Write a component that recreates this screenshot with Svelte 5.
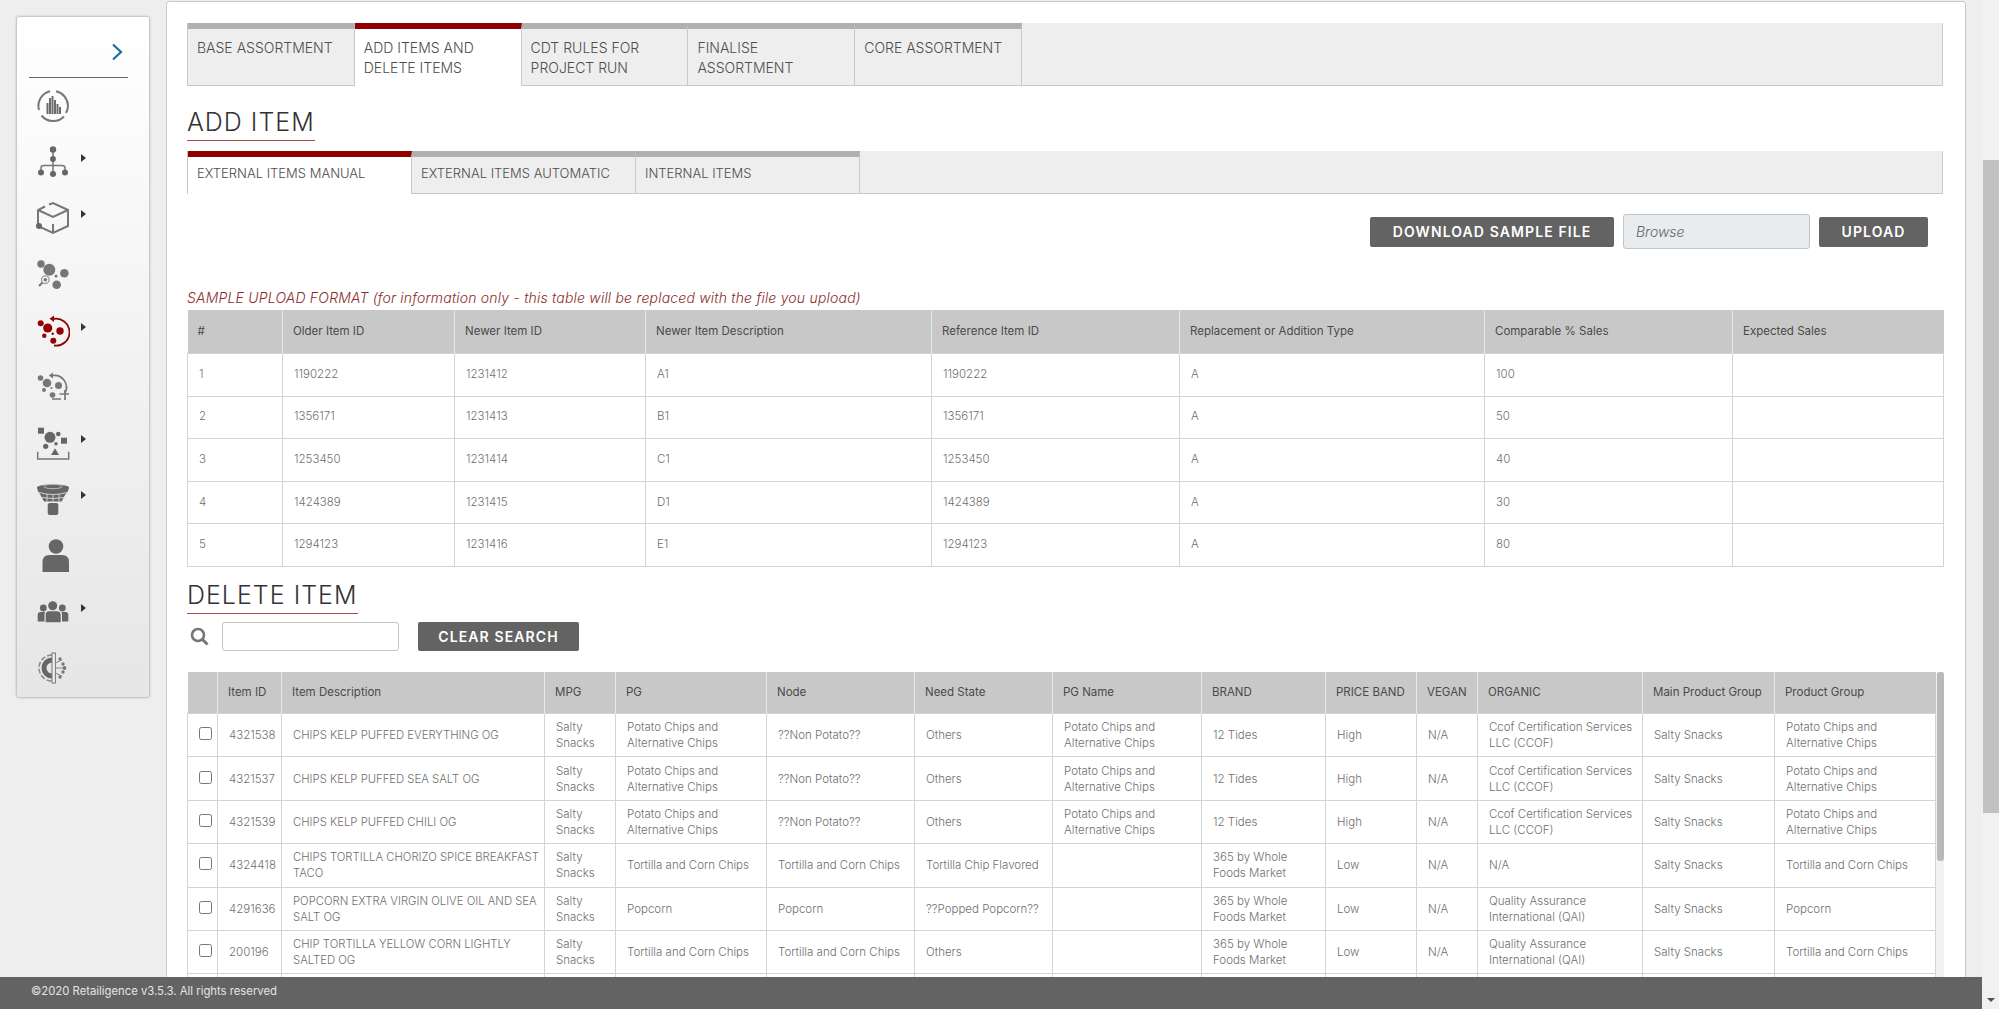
<script>
  const topTabs = ['BASE ASSORTMENT', 'ADD ITEMS AND DELETE ITEMS', 'CDT RULES FOR PROJECT RUN', 'FINALISE ASSORTMENT', 'CORE ASSORTMENT'];
  const subTabs = ['EXTERNAL ITEMS MANUAL', 'EXTERNAL ITEMS AUTOMATIC', 'INTERNAL ITEMS'];
  const sampleCols = [95, 172, 191, 286, 248, 305, 248, 211];
  const sampleHead = ['#', 'Older Item ID', 'Newer Item ID', 'Newer Item Description', 'Reference Item ID', 'Replacement or Addition Type', 'Comparable % Sales', 'Expected Sales'];
  const sampleRows = [
    ['1', '1190222', '1231412', 'A1', '1190222', 'A', '100', ''],
    ['2', '1356171', '1231413', 'B1', '1356171', 'A', '50', ''],
    ['3', '1253450', '1231414', 'C1', '1253450', 'A', '40', ''],
    ['4', '1424389', '1231415', 'D1', '1424389', 'A', '30', ''],
    ['5', '1294123', '1231416', 'E1', '1294123', 'A', '80', '']
  ];
  const itemCols = [30, 64, 263, 71, 151, 148, 138, 149, 124, 91, 61, 165, 132, 161];
  const itemHead = ['', 'Item ID', 'Item Description', 'MPG', 'PG', 'Node', 'Need State', 'PG Name', 'BRAND', 'PRICE BAND', 'VEGAN', 'ORGANIC', 'Main Product Group', 'Product Group'];
  const pca = 'Potato Chips and Alternative Chips';
  const tcc = 'Tortilla and Corn Chips';
  const ccof = 'Ccof Certification Services LLC (CCOF)';
  const qai = 'Quality Assurance International (QAI)';
  const wf = '365 by Whole Foods Market';
  const ss = 'Salty Snacks';
  const itemRows = [
    ['4321538', 'CHIPS KELP PUFFED EVERYTHING OG', ss, pca, '??Non Potato??', 'Others', pca, '12 Tides', 'High', 'N/A', ccof, ss, pca],
    ['4321537', 'CHIPS KELP PUFFED SEA SALT OG', ss, pca, '??Non Potato??', 'Others', pca, '12 Tides', 'High', 'N/A', ccof, ss, pca],
    ['4321539', 'CHIPS KELP PUFFED CHILI OG', ss, pca, '??Non Potato??', 'Others', pca, '12 Tides', 'High', 'N/A', ccof, ss, pca],
    ['4324418', 'CHIPS TORTILLA CHORIZO SPICE BREAKFAST TACO', ss, tcc, tcc, 'Tortilla Chip Flavored', '', wf, 'Low', 'N/A', 'N/A', ss, tcc],
    ['4291636', 'POPCORN EXTRA VIRGIN OLIVE OIL AND SEA SALT OG', ss, 'Popcorn', 'Popcorn', '??Popped Popcorn??', '', wf, 'Low', 'N/A', qai, ss, 'Popcorn'],
    ['200196', 'CHIP TORTILLA YELLOW CORN LIGHTLY SALTED OG', ss, tcc, tcc, 'Others', '', wf, 'Low', 'N/A', qai, ss, tcc]
  ];
</script>

<div class="page">
  <aside class="sidebar">
    <div class="side-top">
      <svg class="chev" width="12" height="18" viewBox="0 0 12 18"><path d="M2 1.5 10 9 2 16.5" fill="none" stroke="#1c6ca1" stroke-width="2.2"/></svg>
    </div>
    <nav class="nav">
      <div class="nav-item">
        <svg viewBox="0 0 34 34"><g fill="none" stroke="#777" stroke-width="2"><path d="M3 21A15 15 0 0 1 14 2.3"/><path d="M20 2.3A15 15 0 0 1 32 17 15 15 0 0 1 30 24"/><path d="M5.5 26.5A15 15 0 0 0 28 27.5"/></g><g fill="#6c6c6c"><rect x="10.500" y="14" width="2" height="11"/><rect x="13" y="9" width="2" height="16"/><rect x="15.500" y="7" width="2" height="18"/><rect x="18" y="11" width="2" height="14"/><rect x="20.500" y="15" width="2" height="10"/><rect x="23" y="18" width="2" height="7"/></g></svg>
      </div>
      <div class="nav-item">
        <svg viewBox="0 0 34 34"><path d="M17 4V28M5 27V23Q5 20.500 8 20.500H26Q29 20.500 29 23V27" fill="none" stroke="#777" stroke-width="1.500"/><g fill="#666"><circle cx="17" cy="4.500" r="3.200"/><circle cx="17" cy="14" r="2.900"/><circle cx="5" cy="27.500" r="3"/><circle cx="17" cy="29" r="3"/><circle cx="29" cy="27.500" r="3"/></g></svg>
        <span class="caret"></span>
      </div>
      <div class="nav-item">
        <svg viewBox="0 0 34 34"><path d="M13 3.500 17 2 32 9V25L17 32 2 25V9L9 5.500M2 9 17 16 32 9M17 23V32" fill="none" stroke="#777" stroke-width="2"/><circle cx="3" cy="25" r="3" fill="#666"/></svg>
        <span class="caret"></span>
      </div>
      <div class="nav-item">
        <svg viewBox="0 0 34 34"><g fill="#777"><circle cx="13.300" cy="11.700" r="6"/><circle cx="5" cy="6" r="3.700"/><circle cx="28.300" cy="15.300" r="4.300"/><circle cx="20.700" cy="26.700" r="4.300"/><circle cx="20" cy="18" r="1.500"/><circle cx="9.300" cy="21.700" r="1.800"/></g><circle cx="9.300" cy="21.700" r="3.800" fill="none" stroke="#999" stroke-width="1.300"/><path d="M6.500 24.500 3 28" stroke="#777" stroke-width="2"/></svg>
      </div>
      <div class="nav-item">
        <svg viewBox="0 0 34 34"><g fill="#960000"><circle cx="11.700" cy="14" r="4.600"/><circle cx="4.700" cy="9.300" r="3"/><circle cx="24" cy="17" r="3.700"/><circle cx="8.300" cy="21.700" r="2.200"/><circle cx="17.300" cy="26.700" r="3"/><circle cx="16.700" cy="19.700" r="1.200"/><path d="M18 1.500V8L13.500 4.800Z"/></g><path d="M17 5A13.500 13.500 0 1 1 18 31.500" fill="none" stroke="#960000" stroke-width="1.800"/></svg>
        <span class="caret"></span>
      </div>
      <div class="nav-item">
        <svg viewBox="0 0 34 34"><g fill="#777"><circle cx="11" cy="13" r="4.300"/><circle cx="4.500" cy="8" r="2.800"/><circle cx="22.500" cy="15.500" r="3.500"/><circle cx="8" cy="20" r="2"/><circle cx="16.500" cy="25" r="2.800"/><circle cx="15.500" cy="18" r="1.100"/><path d="M17 2.500V8.500L12.800 5.500Z"/></g><path d="M16.500 5.500A12 12 0 0 1 29 23M16 29H25" fill="none" stroke="#777" stroke-width="1.700"/><path d="M23.500 24H33M29 20V30" stroke="#777" stroke-width="1.700"/></svg>
      </div>
      <div class="nav-item">
        <svg viewBox="0 0 34 34"><g fill="#666"><rect x="2" y="1.700" width="6" height="6"/><circle cx="14" cy="11.300" r="5.500"/><circle cx="22.300" cy="8" r="2.300"/><rect x="25" y="11.700" width="6" height="6"/><circle cx="9.700" cy="20.300" r="2.600"/><circle cx="20" cy="17.700" r="1.700"/><path d="M19 22.300 23 29H15Z"/></g><path d="M1.700 25.700V33H32.700V25.700" fill="none" stroke="#777" stroke-width="1.500"/></svg>
        <span class="caret"></span>
      </div>
      <div class="nav-item">
        <svg viewBox="0 0 34 34"><path d="M1 5C1 8 3 11 4.500 13L8 19.500H25.700L29 13C31 11 33 8 33 5 30 1.500 4 1.500 1 5Z" fill="#666"/><rect x="11.700" y="21" width="10.600" height="12" rx="2" fill="#666"/><ellipse cx="17" cy="4.500" rx="9" ry="2.200" fill="none" stroke="#bbb" stroke-width="1"/><path d="M3 10.500Q17 14.500 31 10.500M6 15.500Q17 17.500 28 15.500M11 12V19.500M23 12V19.500M17 13V19.500" fill="none" stroke="#ddd" stroke-width="0.900"/></svg>
        <span class="caret"></span>
      </div>
      <div class="nav-item">
        <svg viewBox="0 0 34 34"><circle cx="20" cy="7.500" r="7.300" fill="#666"/><path d="M6.500 33V23Q6.500 16 13.500 16H26Q33 16 33 23V33Z" fill="#666"/></svg>
      </div>
      <div class="nav-item">
        <svg viewBox="0 0 34 34"><g fill="#666"><circle cx="16.700" cy="10.700" r="4.500"/><circle cx="7.300" cy="13" r="3.400"/><circle cx="26.300" cy="13" r="3.400"/><path d="M9.700 27.300V20Q9.700 16.300 13 16.300H21Q24.700 16.300 24.700 20V27.300Z"/><path d="M1.700 26.500V20Q1.700 17 4.500 17H9Q8.500 18 8.500 20V26.500Z"/><path d="M32.300 26.500V20Q32.300 17 29.500 17H25.500Q26 18 26 20V26.500Z"/></g></svg>
        <span class="caret"></span>
      </div>
      <div class="nav-item">
        <svg viewBox="0 0 34 34"><path d="M16 9A8 8 0 0 0 16 25" fill="none" stroke="#666" stroke-width="5"/><path d="M16 4A13 13 0 0 0 16 30" fill="none" stroke="#888" stroke-width="1.500" stroke-dasharray="5 2"/><rect x="16" y="2" width="3.400" height="30" fill="#eee" stroke="#777"/><g fill="#777"><circle cx="24" cy="8" r="1.700"/><circle cx="27" cy="13" r="1.700"/><circle cx="28.500" cy="17" r="1.900"/><circle cx="27" cy="21" r="1.700"/><circle cx="24" cy="26" r="1.700"/></g><path d="M19 17H27M19 12 26 9M19 22 26 25" stroke="#888" stroke-width="1"/></svg>
      </div>
    </nav>
  </aside>

  <main class="panel">
    <div class="tabs top">
      {#each topTabs as t, i}
        <div class="tab" class:active={i === 1}>{t}</div>
      {/each}
    </div>

    <h2 class="add">ADD ITEM</h2>

    <div class="tabs sub">
      {#each subTabs as t, i}
        <div class="tab" class:active={i === 0}>{t}</div>
      {/each}
    </div>

    <div class="actions">
      <button class="btn dl">DOWNLOAD SAMPLE FILE</button>
      <div class="browse">Browse</div>
      <button class="btn up">UPLOAD</button>
    </div>

    <p class="note">SAMPLE UPLOAD FORMAT (for information only - this table will be replaced with the file you upload)</p>

    <table class="grid sample">
      <colgroup>{#each sampleCols as w}<col style="width:{w}px" />{/each}</colgroup>
      <thead><tr>{#each sampleHead as h}<th>{h}</th>{/each}</tr></thead>
      <tbody>
        {#each sampleRows as r}
          <tr>{#each r as c}<td>{c}</td>{/each}</tr>
        {/each}
      </tbody>
    </table>

    <h2 class="del">DELETE ITEM</h2>

    <div class="search">
      <svg class="mag" width="19" height="19" viewBox="0 0 19 19"><circle cx="8" cy="8" r="6" fill="none" stroke="#777" stroke-width="2.600"/><path d="M12.500 12.500 17.500 17.500" stroke="#777" stroke-width="3"/></svg>
      <input class="q" type="text" />
      <button class="btn clear">CLEAR SEARCH</button>
    </div>

    <div class="items">
      <table class="grid item">
        <colgroup>{#each itemCols as w}<col style="width:{w}px" />{/each}</colgroup>
        <thead><tr>{#each itemHead as h}<th>{h}</th>{/each}</tr></thead>
        <tbody>
          {#each itemRows as r}
            <tr>
              <td class="chk"><input type="checkbox" /></td>
              {#each r as c}<td>{c}</td>{/each}
            </tr>
          {/each}
          <tr>{#each itemCols as w}<td></td>{/each}</tr>
        </tbody>
      </table>
      <div class="track"><div class="thumb"></div></div>
    </div>
  </main>

  <div class="scroll"><div class="sthumb"></div><span class="sarrow"></span></div>

  <footer class="foot">©2020 Retailigence v3.5.3. All rights reserved</footer>
</div>

<style>
  :global(body) { margin: 0; background: #eeeeee; }
  .page {
    position: relative;
    display: flex;
    align-items: flex-start;
    height: 1009px;
    overflow: hidden;
    font-family: Inter, "Open Sans", sans-serif;
    color: #555;
    background: #eeeeee;
  }
  .sidebar {
    flex: none;
    box-sizing: border-box;
    width: 134px;
    height: 682px;
    margin: 16px 16px 0 16px;
    background: linear-gradient(#ffffff, #e6e6e6);
    border: 1px solid #c9c9c9;
    border-radius: 3px;
    box-shadow: 0 0 2px #bbb;
  }
  .side-top {
    height: 61px;
    margin: 0 21px 0 12px;
    border-bottom: 1px solid #666;
    display: flex;
    justify-content: flex-end;
    align-items: flex-start;
    padding-top: 26px;
    box-sizing: border-box;
  }
  .chev { margin-right: 5px; }
  .nav { padding-left: 19px; }
  .nav-item {
    height: 56.2px;
    display: flex;
    align-items: center;
    position: relative;
  }
  .nav-item svg { width: 34px; height: 34px; display: block; }
  .caret {
    width: 0;
    height: 0;
    margin: -8px 0 0 11px;
    border-left: 5px solid #333;
    border-top: 4px solid transparent;
    border-bottom: 4px solid transparent;
  }
  .panel {
    flex: none;
    box-sizing: border-box;
    width: 1800px;
    height: 1100px;
    margin-top: 1px;
    padding: 21px 22px 0 20px;
    background: #fff;
    border: 1px solid #c9c9c9;
    border-radius: 3px;
    overflow: hidden;
  }
  .tabs {
    display: flex;
    background: #eeeeee;
    border: 1px solid #c8c8c8;
    border-top: none;
    box-sizing: border-box;
  }
  .tabs.top { height: 63px; }
  .tabs.sub { height: 43px; margin-top: 10px; }
  .tab {
    box-sizing: border-box;
    border-top: 6px solid #b0b0b0;
    border-right: 1px solid #c8c8c8;
    color: #4d4d4d;
  }
  .top .tab {
    width: 166.800px;
    padding: 9px 8px 0 9px;
    font-size: 14px;
    line-height: 19.500px;
    font-weight: 300;
    height: 62px;
  }
  .top .tab:nth-child(2), .top .tab:nth-child(3) { padding-right: 22px; }
  .sub .tab {
    width: 224px;
    padding: 0 4px 0 9px;
    font-size: 13px;
    line-height: 32px;
    font-weight: 300;
    height: 42px;
  }
  .tab.active { background: #fff; border-top-color: #900000; }
  .top .tab.active { height: 63px; }
  .sub .tab.active { height: 43px; }
  h2 {
    width: fit-content;
    margin: 0;
    font-size: 25px;
    line-height: 30px;
    font-weight: 300;
    letter-spacing: 1px;
    color: #333;
    padding: 1px 0 3px;
    border-bottom: 1px solid #b04a4a;
  }
  .add { margin-top: 20px; }
  .del { margin-top: 12px; }
  .actions {
    display: flex;
    justify-content: flex-end;
    align-items: center;
    gap: 9px;
    height: 35px;
    margin-top: 20px;
    padding-right: 15px;
  }
  .btn {
    height: 30px;
    padding: 0;
    border: none;
    border-radius: 2px;
    background: #636363;
    color: #fff;
    font: 600 14px/30px Inter, sans-serif;
    letter-spacing: 1.100px;
  }
  .btn.dl { width: 244px; }
  .btn.up { width: 109px; }
  .btn.clear { width: 161px; height: 29px; line-height: 29px; margin-left: 19px; }
  .browse {
    box-sizing: border-box;
    width: 187px;
    height: 35px;
    padding-left: 12px;
    line-height: 33px;
    font-size: 14px;
    font-style: italic;
    font-weight: 300;
    color: #666;
    background: #e9ecef;
    border: 1px solid #c5c5c5;
    border-radius: 3px;
  }
  .note {
    margin: 39px 0 2px;
    font-size: 14px;
    line-height: 20px;
    font-style: italic;
    font-weight: 300;
    letter-spacing: 0.200px;
    color: #8a2b2b;
    white-space: nowrap;
  }
  .grid {
    border-collapse: collapse;
    table-layout: fixed;
    font-size: 11.500px;
    line-height: 16px;
  }
  .grid th {
    background: #c8c8c8;
    font-weight: 400;
    color: #4a4a4a;
    text-align: left;
    padding: 0 4px 1px 10px;
    border-right: 1px solid #e6e6e6;
  }
  .grid th:last-child { border-right: none; }
  .grid td {
    padding: 0 4px 0 11px;
    border: 1px solid #d4d4d4;
    color: #6f6f6f;
    font-weight: 300;
  }
  .sample { width: 1756px; }
  .sample th { height: 42px; }
  .sample td { height: 39.600px; padding-bottom: 2px; }
  .search {
    display: flex;
    align-items: center;
    height: 29px;
    margin-top: 8px;
  }
  .mag { margin: 0 13px 0 3px; flex: none; }
  .q {
    box-sizing: border-box;
    width: 177px;
    height: 29px;
    border: 1px solid #c5c5c5;
    border-radius: 3px;
    background: #fff;
    padding: 0;
  }
  .items {
    display: flex;
    align-items: flex-start;
    margin-top: 21px;
    width: 1757px;
    height: 320px;
    overflow: hidden;
  }
  .item { width: 1749px; flex: none; }
  .item th { height: 40px; }
  .item td { height: 42.400px; }
  .item td:nth-child(3) { font-size: 11.300px; padding-right: 0; }
  .chk { padding: 0 0 0 11px !important; }
  .chk input { display: block; margin: -3px 0 0 0; width: 13px; height: 13px; }
  .track { width: 8px; flex: none; height: 320px; background: #f1f1f1; }
  .thumb { width: 7px; margin-left: 1px; height: 189px; background: #b9b9b9; border-radius: 3px; }
  .scroll {
    position: absolute;
    top: 0;
    right: 0;
    width: 17px;
    height: 1009px;
    background: #f1f1f1;
  }
  .sthumb { position: absolute; top: 160px; left: 1px; width: 16px; height: 653px; background: #c1c1c1; }
  .sarrow {
    position: absolute;
    left: 5px;
    bottom: 7px;
    border-top: 4px solid #505050;
    border-left: 4px solid transparent;
    border-right: 4px solid transparent;
  }
  .foot {
    position: absolute;
    left: 0;
    right: 17px;
    bottom: 0;
    height: 32px;
    padding-left: 31px;
    background: #636363;
    color: #e4e4e4;
    font-size: 11.300px;
    line-height: 28px;
  }
</style>
